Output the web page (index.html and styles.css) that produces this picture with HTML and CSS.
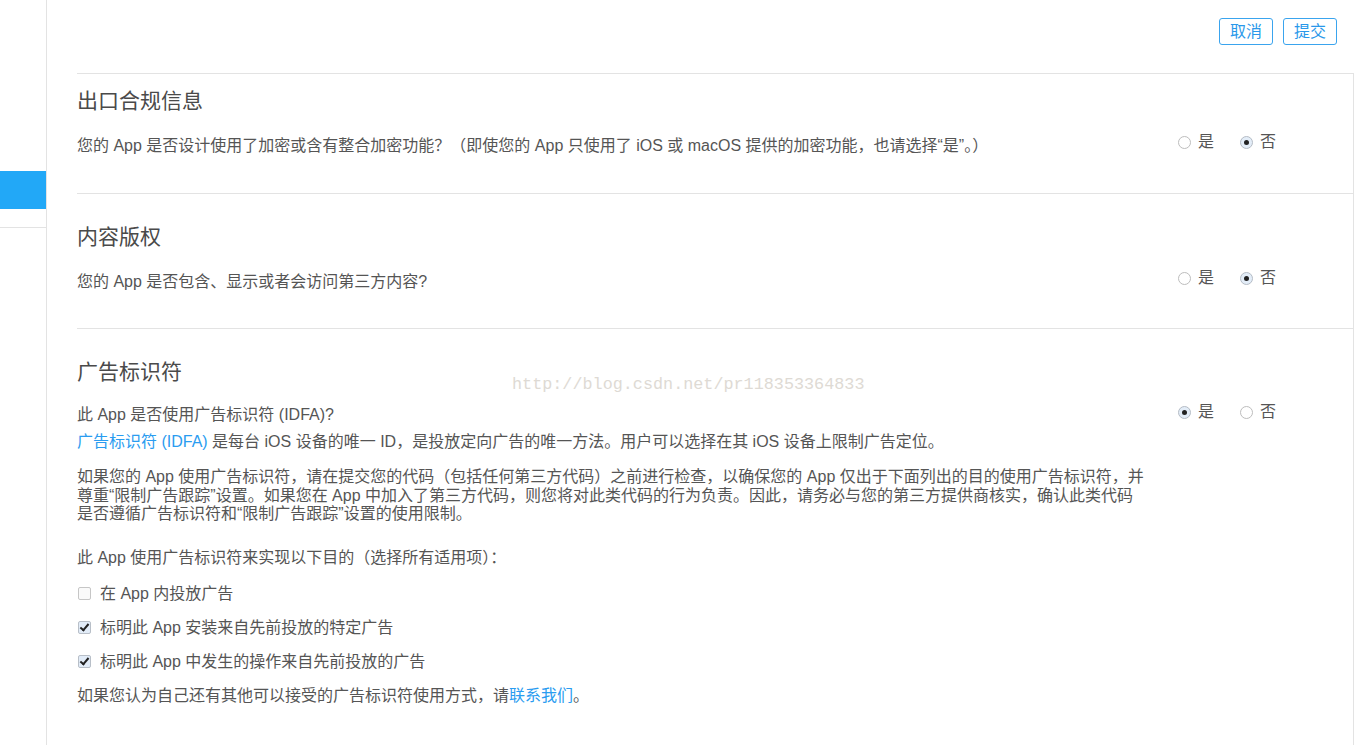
FILE: index.html
```html
<!DOCTYPE html>
<html lang="zh-CN">
<head>
<meta charset="utf-8">
<title>App 信息</title>
<link rel="stylesheet" href="styles.css">
</head>
<body>
<div class="page">
  <aside class="sidebar">
    <div class="side-active"></div>
    <div class="side-rule"></div>
  </aside>
  <main class="main">
    <div class="toolbar">
      <button class="btn">取消</button>
      <button class="btn">提交</button>
    </div>
    <div class="panel">
      <section class="sec sec-first">
        <div class="sec-left">
          <h2 class="sec-title">出口合规信息</h2>
          <p class="line q">您的 App 是否设计使用了加密或含有整合加密功能？（即使您的 App 只使用了 iOS 或 macOS 提供的加密功能，也请选择“是”。）</p>
        </div>
        <div class="choices">
          <label class="opt"><span class="radio"></span>是</label>
          <label class="opt"><span class="radio on"></span>否</label>
        </div>
      </section>
      <section class="sec">
        <div class="sec-left">
          <h2 class="sec-title">内容版权</h2>
          <p class="line q">您的 App 是否包含、显示或者会访问第三方内容?</p>
        </div>
        <div class="choices">
          <label class="opt"><span class="radio"></span>是</label>
          <label class="opt"><span class="radio on"></span>否</label>
        </div>
      </section>
      <section class="sec sec-last">
        <div class="sec-left">
          <h2 class="sec-title">广告标识符</h2>
          <p class="line q">此 App 是否使用广告标识符 (IDFA)?</p>
          <p class="line idfa"><a class="link">广告标识符 (IDFA)</a> 是每台 iOS 设备的唯一 ID，是投放定向广告的唯一方法。用户可以选择在其 iOS 设备上限制广告定位。</p>
          <p class="para">如果您的 App 使用广告标识符，请在提交您的代码（包括任何第三方代码）之前进行检查，以确保您的 App 仅出于下面列出的目的使用广告标识符，并<br>尊重“限制广告跟踪”设置。如果您在 App 中加入了第三方代码，则您将对此类代码的行为负责。因此，请务必与您的第三方提供商核实，确认此类代码<br>是否遵循广告标识符和“限制广告跟踪”设置的使用限制。</p>
          <p class="line purpose">此 App 使用广告标识符来实现以下目的（选择所有适用项）：</p>
          <label class="line check"><span class="box"></span>在 App 内投放广告</label>
          <label class="line check"><span class="box on"></span>标明此 App 安装来自先前投放的特定广告</label>
          <label class="line check"><span class="box on"></span>标明此 App 中发生的操作来自先前投放的广告</label>
          <p class="line final">如果您认为自己还有其他可以接受的广告标识符使用方式，请<a class="link">联系我们</a>。</p>
        </div>
        <div class="choices choices-ad">
          <label class="opt"><span class="radio on"></span>是</label>
          <label class="opt"><span class="radio"></span>否</label>
        </div>
      </section>
    </div>
    <div class="watermark">http://blog.csdn.net/pr118353364833</div>
  </main>
</div>
</body>
</html>
```
FILE: styles.css
```css
html, body {
  margin: 0;
  padding: 0;
  background: #fff;
}
body {
  font-family: "Liberation Sans", "Noto Sans CJK SC", sans-serif;
  color: #555;
  width: 1354px;
  height: 745px;
  overflow: hidden;
}
.page {
  display: flex;
  height: 745px;
}
.sidebar {
  width: 46px;
  flex: 0 0 46px;
  border-right: 1px solid #e3e3e3;
  padding-top: 171px;
  box-sizing: content-box;
}
.side-active {
  height: 38px;
  background: #22a8f7;
}
.side-rule {
  margin-top: 18px;
  height: 1px;
  background: #e3e3e3;
}
.main {
  flex: 1;
  position: relative;
  padding-left: 30px;
}
.toolbar {
  height: 73px;
  display: flex;
  justify-content: flex-end;
  align-items: flex-start;
  gap: 10px;
  padding-right: 17px;
  box-sizing: border-box;
  padding-top: 18px;
}
.btn {
  width: 54px;
  height: 27px;
  border: 1px solid #3aa4ee;
  border-radius: 3px;
  background: #fff;
  color: #2a98ea;
  font-family: "Liberation Sans", "Noto Sans CJK SC", sans-serif;
  font-size: 16px;
  line-height: 25px;
  padding: 0;
  box-sizing: border-box;
}
.panel {
  border-right: 1px solid #e3e3e3;
  height: 672px;
}
.sec {
  display: grid;
  grid-template-columns: 1101px 1fr;
  border-top: 1px solid #e3e3e3;
  padding-top: 29px;
  padding-bottom: 36px;
}
.sec-first {
  padding-top: 13px;
  padding-bottom: 37px;
}
.sec-last {
  padding-bottom: 0;
}
.sec-title {
  margin: 0;
  font-size: 21px;
  line-height: 28px;
  font-weight: normal;
  color: #4a4a4a;
}
.line {
  display: block;
  margin: 0;
  font-size: 16px;
  line-height: 20px;
  white-space: nowrap;
}
.q {
  margin-top: 21px;
}
.sec-last .q {
  margin-top: 19px;
}
.idfa {
  margin-top: 7px;
}
.link {
  color: #2a9cf0;
  text-decoration: none;
}
.para {
  margin: 16px 0 0;
  font-size: 16px;
  line-height: 18.5px;
  white-space: nowrap;
}
.purpose {
  margin-top: 24px;
}
.check {
  margin-top: 16px;
  display: flex;
  align-items: center;
}
.check + .check {
  margin-top: 14px;
}
.final {
  margin-top: 14px;
}
.box {
  width: 11px;
  height: 11px;
  border: 1px solid #c6c6c6;
  border-radius: 2px;
  margin-right: 9px;
  margin-left: 1px;
  position: relative;
  background: #fafafa;
}
.box.on {
  background: #e2ecf8;
  border-color: #b8bfc8;
}
.box.on::after {
  content: "";
  position: absolute;
  left: 3px;
  top: 0px;
  width: 3px;
  height: 7px;
  border-right: 2px solid #222;
  border-bottom: 2px solid #222;
  transform: rotate(40deg);
}
.choices {
  display: flex;
  align-items: flex-start;
  padding-top: 45px;
}
.choices-ad {
  padding-top: 44px;
}
.opt {
  display: flex;
  align-items: center;
  width: 62px;
  font-size: 16px;
  line-height: 20px;
  color: #555;
}
.radio {
  width: 11px;
  height: 11px;
  border: 1px solid #bdbdbd;
  border-radius: 50%;
  margin-right: 7px;
  position: relative;
  background: #fff;
}
.radio.on {
  background: #e3edf8;
  border-color: #b5bcc5;
}
.radio.on::after {
  content: "";
  position: absolute;
  left: 3px;
  top: 3px;
  width: 5px;
  height: 5px;
  border-radius: 50%;
  background: #222;
}
.watermark {
  position: absolute;
  left: 465px;
  top: 375px;
  font-family: "Liberation Mono", monospace;
  font-size: 16.8px;
  color: #dedad4;
  white-space: nowrap;
}
```
